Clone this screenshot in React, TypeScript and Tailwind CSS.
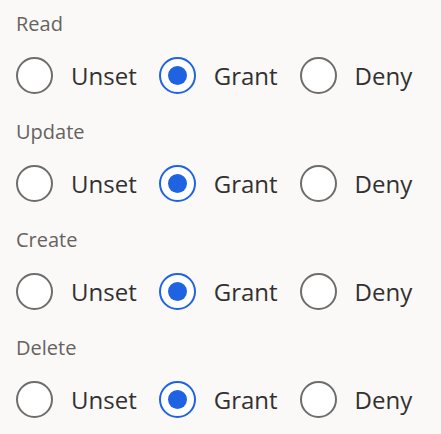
import { useState } from "react";

type Choice = "unset" | "grant" | "deny";

const options: { key: Choice; label: string }[] = [
  { key: "unset", label: "Unset" },
  { key: "grant", label: "Grant" },
  { key: "deny", label: "Deny" },
];

function RadioDot({ checked }: { checked: boolean }) {
  return checked ? (
    <span className="w-[37px] h-[37px] shrink-0 rounded-full border-2 border-[#1f63e2] bg-white flex items-center justify-center">
      <span className="w-[19px] h-[19px] rounded-full bg-[#1f63e2]" />
    </span>
  ) : (
    <span className="w-[37px] h-[37px] shrink-0 rounded-full border-2 border-[#6e6d6c] bg-white" />
  );
}

function PermissionGroup({ name, value, onChange }: { name: string; value: Choice; onChange: (v: Choice) => void }) {
  return (
    <div className="flex flex-col">
      <div className="h-7 leading-7 text-[20px] text-[#66635f] mb-[19px]">{name}</div>
      <div className="flex items-center h-[37px]">
        {options.map((o) => (
          <button
            key={o.key}
            type="button"
            onClick={() => onChange(o.key)}
            className="flex items-center gap-[18px] mr-[22px] cursor-pointer"
          >
            <RadioDot checked={value === o.key} />
            <span className="text-[24px] leading-none text-[#323130]">{o.label}</span>
          </button>
        ))}
      </div>
    </div>
  );
}

export default function App() {
  const [perms, setPerms] = useState<Record<string, Choice>>({
    Read: "grant",
    Update: "grant",
    Create: "grant",
    Delete: "grant",
  });

  return (
    <div
      className="w-[441px] h-[434px] bg-[#faf9f8] pl-4 pt-[10px] flex flex-col gap-6"
      style={{ fontFamily: "'Open Sans', 'Noto Sans', sans-serif" }}
    >
      {Object.keys(perms).map((k) => (
        <PermissionGroup key={k} name={k} value={perms[k]} onChange={(v) => setPerms({ ...perms, [k]: v })} />
      ))}
    </div>
  );
}
